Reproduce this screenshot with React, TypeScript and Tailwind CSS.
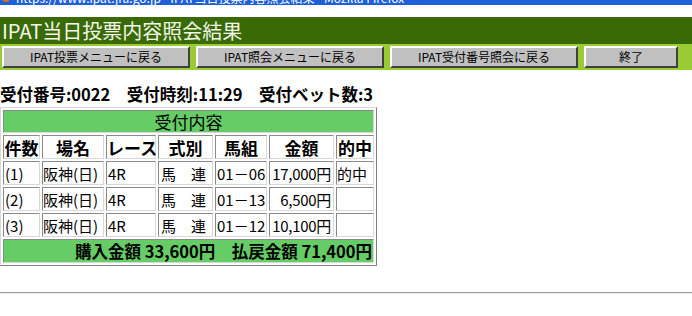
import React from 'react';

const font = { fontFamily: '"Noto Sans CJK JP", "Liberation Sans", sans-serif' };

const buttons = [
  { label: 'IPAT投票メニューに戻る', w: 'w-[188px]' },
  { label: 'IPAT照会メニューに戻る', w: 'w-[188px]' },
  { label: 'IPAT受付番号照会に戻る', w: 'w-[188px]' },
  { label: '終了', w: 'w-[94px]' },
];

const rows = [
  { no: '(1)', place: '阪神(日)', race: '4R', kind: '馬　連', combo: '01－06', amount: '17,000円', hit: '的中' },
  { no: '(2)', place: '阪神(日)', race: '4R', kind: '馬　連', combo: '01－13', amount: '6,500円', hit: '' },
  { no: '(3)', place: '阪神(日)', race: '4R', kind: '馬　連', combo: '01－12', amount: '10,100円', hit: '' },
];

const cell = 'border border-t-[#8a8a8a] border-l-[#8a8a8a] border-b-[#d8d8d8] border-r-[#d8d8d8] p-0 leading-none';

export default function App() {
  return (
    <div className="w-[692px] h-[316px] bg-white overflow-hidden text-black" style={font}>
      {/* window caption, cut off by the screenshot */}
      <div className="h-[5px] overflow-hidden bg-[#1f5fd8]">
        <div className="-mt-[9px] pl-[2px] flex items-center gap-[6px] whitespace-nowrap text-[12px] leading-[14px] text-white">
          <span className="w-[8px] h-[8px] rounded-full bg-[#e86a1c] inline-block" />
          <span>https://www.ipat.jra.go.jp - IPAT当日投票内容照会結果 - Mozilla Firefox</span>
        </div>
      </div>

      <div className="h-[12px]" />

      {/* page title */}
      <div className="h-[27px] bg-[#3a6a06] flex items-center pl-[2px]">
        <span className="text-[20px] leading-none text-[#f4f8ec]">IPAT当日投票内容照会結果</span>
      </div>

      {/* nav buttons */}
      <div className="h-[26px] bg-[#99cc33] flex items-center pl-[2px] gap-[6px]">
        {buttons.map((b) => (
          <button
            key={b.label}
            type="button"
            className={`${b.w} h-[22px] bg-[#c0c0c0] border-2 border-t-white border-l-white border-b-[#404040] border-r-[#404040] text-[12px] leading-none flex items-center justify-center`}
          >
            {b.label}
          </button>
        ))}
      </div>

      {/* receipt info */}
      <div className="mt-[13px] h-[23px] flex items-center text-[16.5px] font-bold leading-none whitespace-nowrap">
        受付番号:0022　受付時刻:11:29　受付ベット数:3
      </div>

      {/* result table */}
      <table className="mt-[1px] border border-t-[#d8d8d8] border-l-[#d8d8d8] border-b-[#808080] border-r-[#808080] border-separate border-spacing-[2px] table-fixed w-[377px]">
        <colgroup>
          <col className="w-[37px]" />
          <col className="w-[62px]" />
          <col className="w-[50px]" />
          <col className="w-[55px]" />
          <col className="w-[52px]" />
          <col className="w-[65px]" />
          <col className="w-[38px]" />
        </colgroup>
        <tbody>
          <tr>
            <td colSpan={7} className={`${cell} h-[23px] bg-[#66cc66] text-center text-[17px]`}>
              受付内容
            </td>
          </tr>
          <tr className="text-[17px] font-bold">
            {['件数', '場名', 'レース', '式別', '馬組', '金額', '的中'].map((h) => (
              <td key={h} className={`${cell} h-[24px] text-center whitespace-nowrap`}>
                {h}
              </td>
            ))}
          </tr>
          {rows.map((r) => (
            <tr key={r.no} className="text-[15px]">
              <td className={`${cell} h-[24px] pl-[1px]`}>{r.no}</td>
              <td className={`${cell} h-[24px] whitespace-nowrap`}>{r.place}</td>
              <td className={`${cell} h-[24px] pl-[1px]`}>{r.race}</td>
              <td className={`${cell} h-[24px] pl-[2px] whitespace-nowrap`}>{r.kind}</td>
              <td className={`${cell} h-[24px] pl-[1px] whitespace-nowrap`}>{r.combo}</td>
              <td className={`${cell} h-[24px] text-right pr-[2px] whitespace-nowrap tracking-[-0.3px]`}>{r.amount}</td>
              <td className={`${cell} h-[24px] whitespace-nowrap`}>{r.hit}</td>
            </tr>
          ))}
          <tr>
            <td colSpan={7} className={`${cell} h-[24px] bg-[#66cc66] text-right pr-[1px] text-[16.5px] font-bold whitespace-nowrap`}>
              購入金額 33,600円　払戻金額 71,400円
            </td>
          </tr>
        </tbody>
      </table>

      <div className="mt-[26px] border-t border-t-[#a0a0a0] border-b border-b-[#e8e8e8]" />
    </div>
  );
}
